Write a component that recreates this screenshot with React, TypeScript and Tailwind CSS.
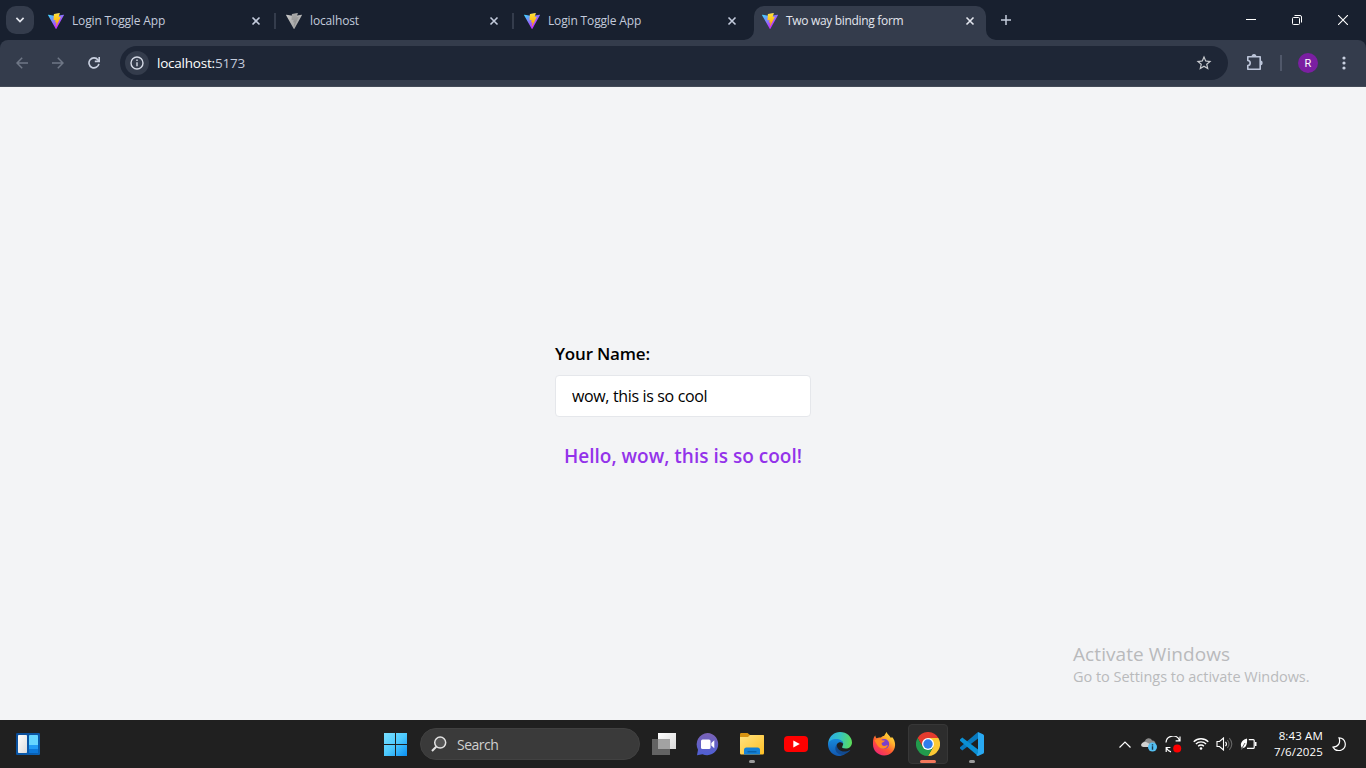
import { useId, useState } from 'react';
import type { ReactNode } from 'react';

function ViteLogo({ gray = false }: { gray?: boolean }) {
  const id = useId();
  return (
    <svg viewBox="0 0 256 257" className="h-4 w-4 shrink-0">
      <defs>
        <linearGradient id={id + 'a'} x1="-.8%" x2="57.6%" y1="7.7%" y2="78.4%">
          <stop offset="0%" stopColor={gray ? '#c4c4c4' : '#41D1FF'} />
          <stop offset="100%" stopColor={gray ? '#a8a8a8' : '#BD34FE'} />
        </linearGradient>
        <linearGradient id={id + 'b'} x1="43.4%" x2="50.3%" y1="2.2%" y2="89%">
          <stop offset="0%" stopColor={gray ? '#b0b0b0' : '#FFEA83'} />
          <stop offset="8.3%" stopColor={gray ? '#a6a6a6' : '#FFDD35'} />
          <stop offset="100%" stopColor={gray ? '#8f8f8f' : '#FFA800'} />
        </linearGradient>
      </defs>
      <path fill={`url(#${id}a)`} d="M255.153 37.938L134.897 252.976c-2.483 4.44-8.862 4.466-11.382.048L.875 37.958c-2.746-4.814 1.371-10.646 6.827-9.67l120.385 21.517a6.537 6.537 0 0 0 2.322-.004l117.867-21.483c5.438-.991 9.574 4.796 6.877 9.62Z" />
      <path fill={`url(#${id}b)`} d="M185.432.063L96.44 17.501a3.268 3.268 0 0 0-2.634 3.014l-5.474 92.456a3.268 3.268 0 0 0 3.997 3.378l24.777-5.718c2.318-.535 4.413 1.507 3.936 3.838l-7.361 36.047c-.495 2.426 1.782 4.5 4.151 3.78l15.304-4.649c2.372-.72 4.652 1.36 4.15 3.788l-11.698 56.621c-.732 3.542 3.979 5.473 5.943 2.437l1.313-2.028l72.516-144.72c1.215-2.423-.88-5.186-3.54-4.672l-25.505 4.922c-2.396.462-4.435-1.77-3.759-4.114l16.646-57.705c.677-2.35-1.37-4.583-3.769-4.113Z" />
    </svg>
  );
}

function CloseGlyph() {
  return (
    <svg viewBox="0 0 10 10" className="h-2.5 w-2.5 shrink-0" stroke="currentColor" strokeWidth="1.6">
      <path d="M1.5 1.5l7 7M8.5 1.5l-7 7" />
    </svg>
  );
}

function Tab({ title, gray, divider }: { title: string; gray?: boolean; divider?: boolean }) {
  return (
    <div className="flex h-[41px] w-[238px] shrink-0 items-center pl-2 text-[#c3cbdc]">
      <ViteLogo gray={gray} />
      <span className="ml-2 flex-1 whitespace-nowrap text-[12px] tracking-[-0.15px]">{title}</span>
      <CloseGlyph />
      <span className={divider ? 'ml-[13px] mr-[2px] h-4 w-[2px] bg-[#343c4c]' : 'ml-[13px] mr-[2px] h-4 w-[2px]'} />
    </div>
  );
}

function ActiveTab() {
  return (
    <div className="flex h-10 shrink-0 items-end">
      <svg viewBox="0 0 10 10" className="-ml-2.5 h-2.5 w-2.5" fill="#343c4c"><path d="M10 0v10H0A10 10 0 0 0 10 0z" /></svg>
      <div className="flex h-[34px] w-[232px] items-center rounded-t-[10px] bg-[#343c4c] pb-[5px] pl-2 pr-[11px] text-[#e3e6ee]">
        <ViteLogo />
        <span className="ml-2 flex-1 whitespace-nowrap text-[12px] tracking-[-0.32px]">Two way binding form</span>
        <CloseGlyph />
      </div>
      <svg viewBox="0 0 10 10" className="h-2.5 w-2.5" fill="#343c4c"><path d="M0 0v10h10A10 10 0 0 1 0 0z" /></svg>
    </div>
  );
}

function TabStrip() {
  return (
    <div className="flex h-10 items-start bg-[#18202f]">
      <div className="ml-1.5 mt-1.5 mr-1.5 flex h-7 w-7 items-center justify-center rounded-[10px] bg-[#343c4c]">
        <svg viewBox="0 0 10 6" className="h-1.5 w-2.5" fill="none" stroke="#e3e6ee" strokeWidth="1.7"><path d="M1.4.9L5 4.5 8.6.9" /></svg>
      </div>
      <Tab title="Login Toggle App" divider />
      <Tab title="localhost" gray divider />
      <Tab title="Login Toggle App" />
      <ActiveTab />
      <svg viewBox="0 0 10 10" className="ml-[5px] mt-[15px] h-2.5 w-2.5" stroke="#c3cbdc" strokeWidth="1.5"><path d="M0 5h10M5 0v10" /></svg>
      <div className="flex h-10 flex-1 items-center justify-end text-white">
        <svg viewBox="0 0 10 10" className="mr-9 h-2.5 w-2.5" stroke="currentColor"><path d="M0 4.5h10" /></svg>
        <svg viewBox="0 0 10 10" className="mr-9 h-2.5 w-2.5" fill="none" stroke="currentColor"><rect x=".5" y="2.5" width="7" height="7" rx="1" /><path d="M2.5.5H8Q9.5.5 9.5 2v5.5" /></svg>
        <svg viewBox="0 0 10 10" className="mr-[18px] h-2.5 w-2.5" stroke="currentColor" strokeWidth="1.1"><path d="M0 0l10 10M10 0L0 10" /></svg>
      </div>
    </div>
  );
}

function Toolbar() {
  return (
    <div className="bg-[#18202f]">
      <div className="flex h-[47px] items-center rounded-t-[8px] border-b border-[#434a57] bg-[#343c4c]">
        <svg viewBox="0 0 12 12" className="ml-4 h-3 w-3" fill="none" stroke="#6f7786" strokeWidth="1.5"><path d="M12 6H1M6.2.7L1 6l5.2 5.3" /></svg>
        <svg viewBox="0 0 12 12" className="ml-6 h-3 w-3" fill="none" stroke="#6f7786" strokeWidth="1.5"><path d="M0 6h11M5.8.7L11 6l-5.2 5.3" /></svg>
        <svg viewBox="0 0 12 12" className="ml-6 h-3 w-3" fill="none" stroke="#c9d0e0" strokeWidth="1.6"><path d="M10.9 6.8A5 5 0 1 1 10 2.9l1 1.1" /><path d="M11.2 0v4.4H6.8" /></svg>
        <div className="ml-5 flex h-[34px] w-[1108px] items-center rounded-full bg-[#1e2636]">
          <div className="ml-[5px] flex h-6 w-6 items-center justify-center rounded-full bg-[#343c4c]">
            <svg viewBox="0 0 14 14" className="h-3.5 w-3.5" fill="none" stroke="#d4d9e5" strokeWidth="1.4"><circle cx="7" cy="7" r="6" /><path d="M7 6.2v4M7 3.6v1.5" /></svg>
          </div>
          <span className="ml-2 flex-1 text-[13.5px] tracking-[-0.22px] text-[#c3cbdc]"><span className="text-white">localhost:</span>5173</span>
          <svg viewBox="0 0 24 24" className="mr-[15px] h-[18px] w-[18px]" fill="#c9cbd0"><path d="M22 9.24l-7.19-.62L12 2 9.19 8.63 2 9.24l5.46 4.73L5.82 21 12 17.27 18.18 21l-1.63-7.03L22 9.24zM12 15.4l-3.76 2.27 1-4.28-3.32-2.88 4.38-.38L12 6.1l1.71 4.04 4.38.38-3.32 2.88 1 4.28L12 15.4z" /></svg>
        </div>
        <svg viewBox="0 0 18 18" className="ml-[18px] h-[18px] w-[18px]" fill="none" stroke="#bcc5d9" strokeWidth="1.6" strokeLinejoin="round">
          <path d="M1.8 2.7H14.2V15.3H1.8V11.5C5 11.3 5 6.7 1.8 6.5Z" />
          <path d="M5.6 2.6a2.4 2.6 0 0 1 4.8 0zM14.4 6.6a2.3 2.4 0 0 1 0 4.8z" fill="#bcc5d9" stroke="none" />
        </svg>
        <span className="ml-4 h-4 w-[2px] bg-[#50586a]" />
        <span className="ml-4 flex h-5 w-5 items-center justify-center rounded-full bg-[#7b1fa2] pt-[2px] font-[Roboto] text-[11px] text-white">R</span>
        <svg viewBox="0 0 4 14" className="ml-6 h-3.5 w-1" fill="#c9d0e0"><circle cx="2" cy="2" r="1.6" /><circle cx="2" cy="7" r="1.6" /><circle cx="2" cy="12" r="1.6" /></svg>
      </div>
    </div>
  );
}

function NameForm() {
  const [name, setName] = useState('wow, this is so cool');
  return (
    <div className="flex w-64 flex-col items-start pt-[3px]">
      <label htmlFor="name" className="h-7 whitespace-nowrap text-[17px] font-semibold leading-7 tracking-[-0.2px] text-black">Your Name:</label>
      <input id="name" value={name} onChange={(e) => setName(e.target.value)} className="mt-[7px] h-[42px] w-64 rounded border border-gray-200 bg-white px-4 text-[16px] tracking-[-0.35px] text-black outline-none" />
      <h2 className="mt-[25px] h-7 self-center whitespace-nowrap text-[19px] font-semibold leading-7 tracking-[0.01px] text-[#9333ea]">Hello, {name}!</h2>
    </div>
  );
}

function TaskItem({ children, active, running }: { children: ReactNode; active?: boolean; running?: boolean }) {
  return (
    <div className={active ? 'relative flex h-10 w-10 items-center justify-center rounded border border-[#373737] bg-[#2d2d2d]' : 'relative flex h-10 w-10 items-center justify-center'}>
      {children}
      {active && <span className="absolute bottom-0 left-[11px] h-[3px] w-4 rounded-full bg-[#f4775b]" />}
      {running && <span className="absolute bottom-px left-[17px] h-[3px] w-1.5 rounded-full bg-[#9a9a9a]" />}
    </div>
  );
}

function Taskbar() {
  return (
    <div className="flex h-12 items-center bg-[#202020]">
      <svg viewBox="0 0 24 22" className="ml-4 h-[22px] w-6">
        <defs><linearGradient id="wg" x1="0" y1="0" x2="1" y2="1"><stop stopColor="#0a4a94" /><stop offset="1" stopColor="#0a63b8" /></linearGradient><linearGradient id="wp" x1="0" y1="0" x2="1" y2="1"><stop stopColor="#fff" /><stop offset="1" stopColor="#dcdcdc" /></linearGradient></defs>
        <rect width="24" height="22" rx="1.2" fill="url(#wg)" />
        <rect x="2" y="2" width="9" height="18" rx=".8" fill="url(#wp)" />
        <rect x="13" y="2" width="9" height="18" rx=".8" fill="#66d5ff" /><path d="M13 12h9v4h-9z" fill="#229bf5" /><path d="M13 16h9v4h-9z" fill="#0c78db" />
      </svg>
      <svg viewBox="0 0 24 24" className="ml-[344px] h-6 w-6">
        <defs><linearGradient id="win" x1="0" y1="0" x2="24" y2="24" gradientUnits="userSpaceOnUse"><stop stopColor="#7be0ff" /><stop offset=".5" stopColor="#4cc9fd" /><stop offset="1" stopColor="#078df2" /></linearGradient></defs>
        <path fill="url(#win)" d="M0 1h11v11H0zM12 1h11v11H12zM0 13h11v11H0zM12 13h11v11H12z" />
      </svg>
      <div className="ml-3 flex h-8 w-[220px] items-center rounded-full border border-[#414141] bg-[#3a3a3a]">
        <svg viewBox="0 0 16 16" className="ml-[10px] h-4 w-4" fill="#555" stroke="#e3e3e3" strokeWidth="1.5"><circle cx="9.2" cy="6.6" r="5.5" /><path d="M5.2 10.7L1 15" strokeWidth="2" /></svg>
        <span className="ml-[10px] text-[14px] tracking-[-0.5px] text-[#d0d0d0]">Search</span>
      </div>
      <div className="ml-1 flex gap-1">
        <TaskItem>
          <svg viewBox="0 0 24 22" className="h-[22px] w-6"><defs><linearGradient id="tv" x1="0" y1="0" x2="1" y2="1"><stop stopColor="#fff" /><stop offset="1" stopColor="#d9d9d9" /></linearGradient></defs><path d="M0 6h18v16H0z" fill="#636363" /><path d="M6 0h18v16H6z" fill="url(#tv)" /><path d="M6 6h12v10H6z" fill="#a2a2a2" /></svg>
        </TaskItem>
        <TaskItem>
          <svg viewBox="0 0 24 24" className="h-6 w-6"><defs><linearGradient id="ch" x1="0" y1="0" x2="0" y2="1"><stop stopColor="#7b62b5" /><stop offset="1" stopColor="#4e5fd4" /></linearGradient></defs><path d="M11.500 1a11.100 11.100 0 1 1-5 21.200L1 23.200l1-5.500A11.300 11.300 0 0 1 11.500 1z" fill="url(#ch)" /><rect x="5" y="7.500" width="9.500" height="9.500" rx="1.500" fill="#fff" /><path d="M15.300 11l3-2.800v8l-3-2.800z" fill="#fff" /></svg>
        </TaskItem>
        <TaskItem running>
          <svg viewBox="0 0 24 24" className="h-6 w-6"><defs><linearGradient id="fo" x1="0" y1="0" x2="1" y2="1"><stop stopColor="#ffe381" /><stop offset="1" stopColor="#ffbf24" /></linearGradient></defs><path d="M0 2.2Q0 1 1.2 1h6.3L10 3h13q1 0 1 1v5H0z" fill="#d89310" /><path d="M0 5h8l2-2h13q1 0 1 1v17q0 1.500-1.200 1.500H1.200Q0 22.500 0 21z" fill="url(#fo)" /><path d="M4 22.500V18q0-2.500 2.500-2.500h11q2.500 0 2.500 2.500v4.500z" fill="#1481d6" /><path d="M7.500 19h9v1.500h-9z" fill="#0862aa" /></svg>
        </TaskItem>
        <TaskItem>
          <svg viewBox="0 0 24 16" className="h-4 w-6"><rect width="24" height="16" rx="4" fill="#f00" /><path d="M9.300 4.500l6.500 3.500-6.500 3.500z" fill="#fff" /></svg>
        </TaskItem>
        <TaskItem>
          <svg viewBox="0 0 24 24" className="h-6 w-6">
            <defs><linearGradient id="e1" x1="0" y1=".3" x2="1" y2=".4"><stop stopColor="#2aa9e8" /><stop offset=".5" stopColor="#35c4c0" /><stop offset="1" stopColor="#5bdc5a" /></linearGradient><linearGradient id="e2" x1="0" y1="0" x2="0" y2="1"><stop stopColor="#1789dc" /><stop offset="1" stopColor="#1158b1" /></linearGradient></defs>
            <path d="M.4 9.500C1.700 3.900 6.300 0 12 0c6.800 0 12 4.800 12 10.400 0 3.700-2.900 6.100-6.300 6.100-3 0-4.200-1-3.300-2.300 2.100-3.300-.2-6-4.400-6C5.500 8.200 1.800 9.700 0 14z" fill="url(#e1)" />
            <path d="M0 12.500C.2 9 4.200 7 8.200 7c3.700 0 7 1.800 7 5-1.200-2.200-4.700-2.400-6.200.3-2.400 4.600 2 11 7.700 9.600C9.700 27 .3 21.800 0 12.500z" fill="url(#e2)" />
            <path d="M9 12.300c-.8 4.400 4.200 8.600 9.800 6.900 1.700-.5 3.100-1.500 3.400-1.200.4.300-1.800 3-5.500 4.300C9.400 24.800 4.700 17.400 9 12.300z" fill="#124b91" />
          </svg>
        </TaskItem>
        <TaskItem>
          <svg viewBox="0 0 24 24" className="h-6 w-6">
            <defs><linearGradient id="ff" x1="1" y1="0" x2=".25" y2="1"><stop stopColor="#fff04e" /><stop offset=".35" stopColor="#ffb62e" /><stop offset=".65" stopColor="#ff5631" /><stop offset="1" stopColor="#ef2376" /></linearGradient></defs>
            <path d="M1 10.500C1 7 2 4.500 3.400 3.500c0 1.300.5 2.200 1.200 2.700C5.800 5.500 7.500 5.400 9 5.600 9.600 4.700 10.700 4 12 4c1-1 1.500-2.800 2.700-4C15 2 17.500 3.300 19 6c.6-.2.8-.7.8-1.200C22 7 23.200 9.800 23.100 13c-.2 6.100-4.900 10.500-11 10.500S1 18.800 1 12.600z" fill="url(#ff)" />
            <circle cx="12.200" cy="12" r="5" fill="#7c3fcb" />
            <path d="M2.500 8.200c2.300-1.500 5-1.300 6.800-.3 1 .5 2.500.6 3.700.6-.3 1.200-2.300 1.800-3.300 2.400-.5 1.400.8 3 2.600 3 1.800 0 2.400-.8 3.600-.5-1 2.300-3.400 3.600-5.800 3.200C6.600 16 4.500 12 2.500 8.200z" fill="#ff8a22" />
          </svg>
        </TaskItem>
        <TaskItem active>
          <svg viewBox="0 0 48 48" className="h-6 w-6"><path d="M3.200 12A24 24 0 0 1 44.800 12H24L13.600 30z" fill="#e33b2e" /><path d="M44.800 12A24 24 0 0 1 24 48L34.400 30 24 12z" fill="#fcc934" /><path d="M24 48A24 24 0 0 1 3.200 12L13.600 30h20.800z" fill="#229a4c" /><circle cx="24" cy="24" r="12" fill="#fff" /><circle cx="24" cy="24" r="9.400" fill="#2f7ded" /></svg>
        </TaskItem>
        <TaskItem running>
          <svg viewBox="0 0 24 24" className="h-6 w-6"><path d="M18 0v6.500L2.300 18.400 0 16.500v-1.300z" fill="#0879be" /><path d="M18 24v-6.500L2.300 5.600 0 7.500v1.300z" fill="#0b91d5" /><path d="M18 0l5 2.200q1 .5 1 1.500v16.600q0 1-1 1.500L18 24q-1 0-1.700-.8L18 21z" fill="#29a9f2" /></svg>
        </TaskItem>
      </div>
      <div className="flex flex-1 items-center justify-end text-white">
        <svg viewBox="0 0 12 7" className="h-[7px] w-3" fill="none" stroke="currentColor" strokeWidth="1.200"><path d="M.5 6.500L6 1l5.500 5.500" /></svg>
        <svg viewBox="0 0 17 15" className="ml-2.5 h-[15px] w-[17px]"><path d="M3 9a3 3 0 0 1 1-5C5 .5 10 .5 11 3.500 14 3.200 15 6 14 8L8 10z" fill="#8b8b8b" /><path d="M0 8C1 4 5.500 4.500 8 6.500L10 10H2.500Q.3 10 0 8z" fill="#d0d0d0" /><circle cx="11.500" cy="10" r="4.500" fill="#54bff2" /><path d="M10.800 9.200h1.400v3.500h-1.400zM10.800 7.200h1.400v1.200h-1.400z" fill="#153449" /></svg>
        <svg viewBox="0 0 17 17" className="ml-[7px] h-[17px] w-[17px]" fill="none" stroke="currentColor" strokeWidth="1.200"><path d="M1 6.500A7 7 0 0 1 14.500 4.500M15 .5v4.300h-4.400M1.200 16v-4.500h4.200M1.500 12a7 7 0 0 0 4.500 3.800" /><circle cx="12.200" cy="12.500" r="4" fill="#f00" stroke="none" /></svg>
        <svg viewBox="0 0 16 14" className="ml-[11px] h-3.5 w-4" fill="none" stroke="currentColor" strokeWidth="1.300"><path d="M.7 4.800a10.300 10.300 0 0 1 14.600 0M2.900 7a7.200 7.200 0 0 1 10.200 0M5.100 9.200a4.100 4.100 0 0 1 5.800 0" /><circle cx="8" cy="11.500" r="1.300" fill="currentColor" stroke="none" /></svg>
        <svg viewBox="0 0 17 14" className="ml-[7px] h-3.5 w-[17px]" fill="none" stroke="currentColor" strokeWidth="1.100"><path d="M1 4.500h2.500L7.500 1v12L3.500 9.500H1z" /><path d="M9.500 4.800q2 2.200 0 4.400" /><path d="M11.300 3q3.500 4 0 8M13.300 1.200q5 5.800 0 11.600" stroke="#666" /></svg>
        <svg viewBox="0 0 17 14" className="ml-[7px] h-3.5 w-[17px]" fill="none" stroke="currentColor" strokeWidth="1.200"><path d="M8.800 2.600h4.400q1 0 1 1v6.800q0 1-1 1H7" /><path d="M15 5h1.500v4H15z" fill="currentColor" stroke="none" /><path d="M.8 13l1-2C-.5 7.500 1.500 3 7 1.500c.5 5.500-1 9.500-4.200 9.500z" fill="currentColor" stroke="none" /><path d="M1.200 12.500L5 6" stroke="#202020" strokeWidth=".7" /></svg>
        <div className="ml-4 w-[50px] whitespace-nowrap text-right text-[11.500px] leading-4 tracking-[0.14px]"><div>8:43 AM</div><div>7/6/2025</div></div>
        <svg viewBox="0 0 14 14" className="ml-[9px] mr-5 h-3.5 w-3.5" fill="none" stroke="currentColor" strokeWidth="1.200"><path d="M7 .8C14 1 15.500 10 9.500 13 6.500 14.300 3 13.500 1 10.200 6 10 9 6 7 .8z" /></svg>
      </div>
    </div>
  );
}

export default function App() {
  return (
    <div className="flex h-[768px] w-[1366px] flex-col overflow-hidden font-['Open_Sans','Noto_Sans',sans-serif]">
      <TabStrip />
      <Toolbar />
      <main className="relative flex flex-1 items-center justify-center bg-[#f3f4f6]">
        <NameForm />
        <aside className="absolute left-[1073px] top-[555px] whitespace-nowrap text-[#b9babc]">
          <p className="text-[19px] leading-6 tracking-[0.08px]">Activate Windows</p>
          <p className="text-[14.5px] leading-[22px] tracking-[-0.03px]">Go to Settings to activate Windows.</p>
        </aside>
      </main>
      <Taskbar />
    </div>
  );
}
